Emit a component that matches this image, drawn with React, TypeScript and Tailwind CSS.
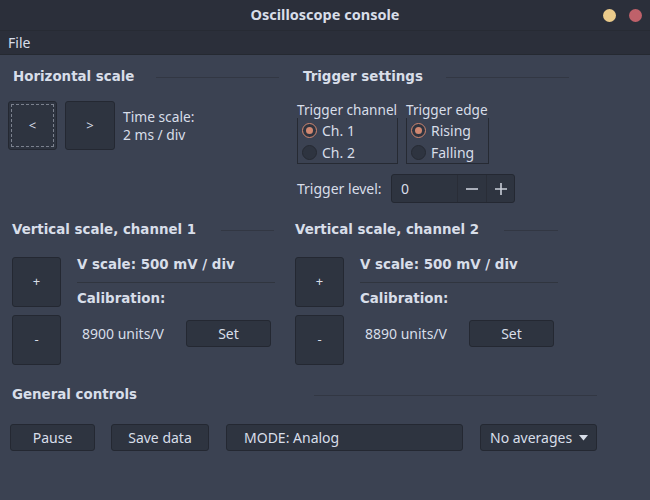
import React, { useState } from "react";

const Heading = ({ title, textW, lineW }: { title: string; textW: string; lineW: string }) => (
  <div className="flex items-center h-[20px]">
    <span className={`${textW} font-['DejaVu_Sans',sans-serif] font-bold text-[13.4px] whitespace-nowrap`}>{title}</span>
    <div className={`${lineW} h-px bg-[#323743]`} />
  </div>
);

const Radio = ({ checked, label, onClick }: { checked: boolean; label: string; onClick: () => void }) => (
  <div className="flex items-center h-[22px] pl-[4px] cursor-pointer" onClick={onClick}>
    {checked ? (
      <div className="w-[15px] h-[15px] rounded-full border-[1.5px] border-[#d08770] bg-[#2e3440] flex items-center justify-center">
        <div className="w-[7px] h-[7px] rounded-full bg-[#d08770]" />
      </div>
    ) : (
      <div className="w-[15px] h-[15px] rounded-full border border-[#262a33] bg-[#2e3440]" />
    )}
    <span className="ml-[5px]">{label}</span>
  </div>
);

const btn = "bg-[#2e3440] border border-[#242832] rounded-[3px] flex items-center justify-center";

const VerticalBlock = ({ channel, units, lineW }: { channel: number; units: string; lineW: string }) => (
  <div>
    <Heading title={`Vertical scale, channel ${channel}`} textW="w-[209px]" lineW={lineW} />
    <div className="flex mt-[17px]">
      <div className="flex flex-col gap-[8px]">
        <button className={`${btn} w-[49px] h-[50px] text-[13px]`}>+</button>
        <button className={`${btn} w-[49px] h-[50px] text-[13px]`}>-</button>
      </div>
      <div className="ml-[16px] w-[198px] flex flex-col">
        <div className="h-[16px] leading-[16px] font-['DejaVu_Sans',sans-serif] font-bold text-[13.4px] whitespace-nowrap">
          V scale: 500 mV / div
        </div>
        <div className="mt-[9px] h-px bg-[#30353f]" />
        <div className="mt-[8px] h-[16px] leading-[16px] font-['DejaVu_Sans',sans-serif] font-bold text-[13.4px]">
          Calibration:
        </div>
        <div className="mt-[13px] flex items-center">
          <span className="w-[109px] pl-[5px] whitespace-nowrap">{units}</span>
          <button className={`${btn} w-[85px] h-[27px]`}>Set</button>
        </div>
      </div>
    </div>
  </div>
);

export default function App() {
  const [channel, setChannel] = useState(1);
  const [edge, setEdge] = useState("rising");
  const [level, setLevel] = useState(0);

  return (
    <div className="w-[650px] h-[500px] bg-[#3b4252] flex flex-col text-[#d8dee9] text-[14px] font-['Noto_Sans',sans-serif] overflow-hidden">
      {/* title bar */}
      <div className="h-[30px] bg-[#2b2f3a] grid grid-cols-[1fr_auto_1fr] items-center">
        <div />
        <div className="font-bold text-[14.5px]">Oscilloscope console</div>
        <div className="flex justify-end gap-[13px] pr-[8px]">
          <div className="w-[13px] h-[13px] rounded-full bg-[#ebcb8b]" />
          <div className="w-[13px] h-[13px] rounded-full bg-[#bf616a]" />
        </div>
      </div>
      <div className="h-[25px] bg-[#2b2f3a] border-t border-[#272b34] border-b border-b-[#252931] flex items-center px-[8px]">
        File
      </div>

      {/* top section */}
      <div className="grid grid-cols-[290px_1fr] pt-[12px]">
        <div className="pl-[8px]">
          <div className="pl-[5px]">
            <Heading title="Horizontal scale" textW="w-[143px]" lineW="w-[123px]" />
          </div>
          <div className="mt-[14px] flex items-center">
            <button className={`${btn} w-[49px] h-[49px] text-[13px] outline-1 outline-dashed outline-[#7b818e] outline-offset-[-4px]`}>&lt;</button>
            <button className={`${btn} ml-[8px] w-[50px] h-[49px] text-[13px]`}>&gt;</button>
            <div className="ml-[8px] leading-[18px] text-[13.8px]">
              <div>Time scale:</div>
              <div>2 ms / div</div>
            </div>
          </div>
        </div>
        <div className="pl-[7px]">
          <div className="pl-[6px]">
            <Heading title="Trigger settings" textW="w-[143px]" lineW="w-[123px]" />
          </div>
          <div className="mt-[15px] flex gap-[8px]">
            <div className="w-[101px]">
              <div className="h-[16px] leading-[16px] whitespace-nowrap text-[13.6px]">Trigger channel</div>
              <div className="h-[46px] border-x border-b border-[#262a33] pt-px">
                <Radio checked={channel === 1} label="Ch. 1" onClick={() => setChannel(1)} />
                <Radio checked={channel === 2} label="Ch. 2" onClick={() => setChannel(2)} />
              </div>
            </div>
            <div className="w-[83px]">
              <div className="h-[16px] leading-[16px] whitespace-nowrap text-[13.6px]">Trigger edge</div>
              <div className="h-[46px] border-x border-b border-[#262a33] pt-px">
                <Radio checked={edge === "rising"} label="Rising" onClick={() => setEdge("rising")} />
                <Radio checked={edge === "falling"} label="Falling" onClick={() => setEdge("falling")} />
              </div>
            </div>
          </div>
          <div className="mt-[10px] flex items-center">
            <span className="w-[94px]">Trigger level:</span>
            <div className="w-[124px] h-[29px] flex bg-[#2e3440] border border-[#242832] rounded-[3px]">
              <div className="w-[65px] pl-[9px] flex items-center">{level}</div>
              <button
                className="w-[29px] border-l border-[#292d37] flex items-center justify-center"
                onClick={() => setLevel(level - 1)}
              >
                <svg width="12" height="12" viewBox="0 0 12 12">
                  <path d="M0 6h12" stroke="#c9ced8" strokeWidth="1.6" />
                </svg>
              </button>
              <button
                className="flex-1 border-l border-[#292d37] flex items-center justify-center"
                onClick={() => setLevel(level + 1)}
              >
                <svg width="12" height="12" viewBox="0 0 12 12">
                  <path d="M0 6h12M6 0v12" stroke="#c9ced8" strokeWidth="1.6" />
                </svg>
              </button>
            </div>
          </div>
        </div>
      </div>

      {/* vertical scales */}
      <div className="grid grid-cols-[295px_1fr] mt-[17px]">
        <div className="pl-[12px]">
          <VerticalBlock channel={1} units="8900 units/V" lineW="w-[53px]" />
        </div>
        <div>
          <VerticalBlock channel={2} units="8890 units/V" lineW="w-[54px]" />
        </div>
      </div>

      {/* general controls */}
      <div className="mt-[20px] pl-[10px]">
        <div className="pl-[2px]">
          <Heading title="General controls" textW="w-[302px]" lineW="w-[283px]" />
        </div>
        <div className="mt-[19px] flex items-center">
          <button className={`${btn} w-[85px] h-[27px]`}>Pause</button>
          <button className={`${btn} ml-[16px] w-[98px] h-[27px]`}>Save data</button>
          <div className={`${btn} ml-[17px] w-[237px] h-[27px] !justify-start pl-[17px]`}>MODE: Analog</div>
          <button className={`${btn} ml-[17px] w-[117px] h-[27px] !justify-start pl-[9px]`}>
            No averages
            <svg className="ml-[7px]" width="9" height="6" viewBox="0 0 9 6">
              <path d="M0 0h9L4.5 5.5z" fill="#d8dee9" />
            </svg>
          </button>
        </div>
      </div>
    </div>
  );
}
